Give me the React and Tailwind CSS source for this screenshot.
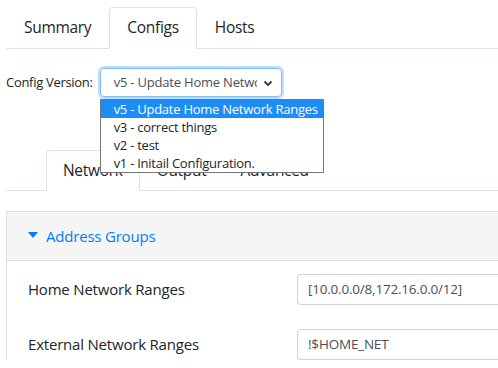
import React from 'react';

const topTabs = ['Summary', 'Configs', 'Hosts'];
const subTabs = ['Network', 'Output', 'Advanced'];
const versions = [
  'v5 - Update Home Network Ranges',
  'v3 - correct things',
  'v2 - test',
  'v1 - Initail Configuration.',
];

const Tabs = ({ items, active, className, tabClass }) => (
  <ul className={`flex border-b border-[#dee2e6] ${className}`}>
    {items.map((t) => (
      <li
        key={t}
        className={`-mb-px flex items-center rounded-t-[4px] border ${tabClass} ${
          t === active
            ? 'border-[#dee2e6] border-b-white bg-white'
            : 'border-transparent'
        }`}
      >
        {t}
      </li>
    ))}
  </ul>
);

const FieldRow = ({ label, value }) => (
  <div className="flex items-center">
    <div className="w-[290px] pl-[21px] text-[15px] tracking-[-0.2px] text-[#212529]">{label}</div>
    <div className="flex-1 h-[31px] border border-[#ced4da] border-r-0 rounded-l-[4px] px-[10px] flex items-center text-[13.5px] tracking-[-0.2px] text-[#495057]">
      {value}
    </div>
  </div>
);

export default function App() {
  return (
    <div className="w-[498px] h-[368px] overflow-hidden bg-white pt-[7px] pl-[6px] font-['Open_Sans',sans-serif] text-[#212529]">
      <Tabs
        items={topTabs}
        active="Configs"
        className=""
        tabClass="h-[42px] px-[17px] text-[15.5px] tracking-[-0.3px]"
      />

      <div className="mt-[19px] flex items-center">
        <span className="text-[13px] tracking-[-0.3px] mr-[7px]">Config Version:</span>
        <div className="relative">
          <div className="w-[182px] h-[29px] border border-[#80bdff] rounded-[4px] shadow-[0_0_0_2px_rgba(0,123,255,0.25)] flex items-center pl-[13px] pr-[8px] text-[13px] text-[#495057] tracking-[-0.2px]">
            <span className="flex-1 overflow-hidden whitespace-nowrap">v5 - Update Home Network Ranges</span>
            <svg width="10" height="10" viewBox="0 0 10 10" className="ml-[6px]">
              <path d="M1.5 3.5 L5 7 L8.5 3.5" fill="none" stroke="#343a40" strokeWidth="1.8" />
            </svg>
          </div>
          <ul className="absolute left-0 top-[31px] z-10 w-[224px] border border-[#767676] bg-white text-[13px] tracking-[-0.25px] text-[#212529] whitespace-nowrap">
            {versions.map((v, i) => (
              <li
                key={v}
                className={`h-[18px] leading-[18px] pl-[13px] ${i === 0 ? 'bg-[#1e8cf5] text-white' : ''}`}
              >
                {v}
              </li>
            ))}
          </ul>
        </div>
      </div>

      <Tabs
        items={subTabs}
        active="Network"
        className="mt-[53px] pl-[40px]"
        tabClass="h-[41px] px-[16px] text-[15.5px] tracking-[-0.3px]"
      />

      <div className="mt-[20px] border-l border-t border-[#dfdfdf]">
        <div className="h-[49px] bg-[#f5f5f5] border-b border-[#dfdfdf] flex items-center pl-[21px] text-[#007bff] text-[15px] tracking-[-0.2px]">
          <svg width="10" height="6" viewBox="0 0 10 6" className="mr-[8px] mt-[-2px]">
            <path d="M0 0 H10 L5 6 Z" fill="#007bff" />
          </svg>
          Address Groups
        </div>
        <div className="pt-[13px] flex flex-col gap-[24px]">
          <FieldRow label="Home Network Ranges" value="[10.0.0.0/8,172.16.0.0/12]" />
          <FieldRow label="External Network Ranges" value="!$HOME_NET" />
        </div>
      </div>
    </div>
  );
}
